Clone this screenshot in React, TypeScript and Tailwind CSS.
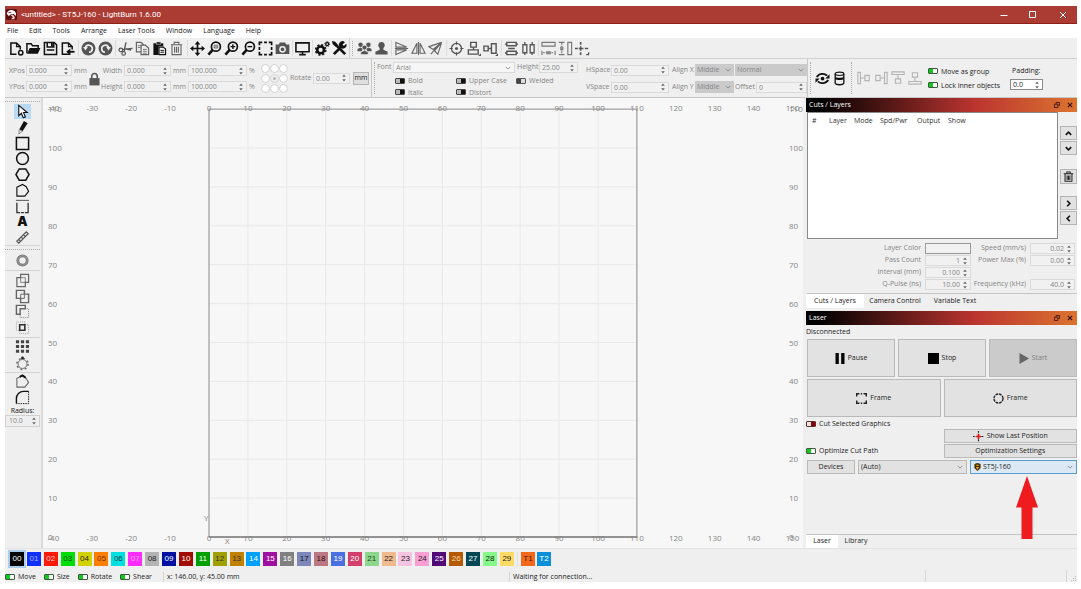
import React from 'react';
import clsx from 'clsx';

type Children = { children?: React.ReactNode };

/* ---------- small building blocks ---------- */

const Icon: React.FC<Children & { className?: string }> = ({ children, className }) => (
  <svg
    viewBox="0 0 16 16"
    className={clsx('shrink-0', className ?? 'w-[15px] h-[15px]')}
    fill="none"
    stroke="currentColor"
    strokeWidth="1.6"
  >
    {children}
  </svg>
);

const Spinner = () => (
  <svg viewBox="0 0 6 8" className="w-[6px] h-[8px] shrink-0 mr-[2px]" fill="#666">
    <path d="M3 0.5 4.8 2.8H1.2zM3 7.5 4.8 5.2H1.2z" />
  </svg>
);

interface SpinProps {
  label: string;
  value: string;
  className?: string;
  right?: boolean;
  active?: boolean;
}

const Spin: React.FC<SpinProps> = ({ label, value, className, right, active }) => (
  <div
    className={clsx(
      'flex items-center h-[11px] border',
      active ? 'bg-white border-[#8c8c8c] text-[#222]' : 'bg-[#f1f1f1] border-[#dadada] text-[#858585]',
      className,
    )}
  >
    <input
      aria-label={label}
      defaultValue={value}
      className={clsx('w-0 grow min-w-0 bg-transparent outline-none px-[2px] leading-[9px]', right && 'text-right')}
    />
    <Spinner />
  </div>
);

const Toggle: React.FC<{ label: string; on?: boolean; red?: boolean; dim?: boolean; flip?: boolean }> = ({
  label,
  on,
  red,
  dim,
  flip,
}) => (
  <label className={clsx('flex items-center gap-[3px] whitespace-nowrap', dim ? 'text-[#858585]' : 'text-[#222]')}>
    <input
      type="checkbox"
      defaultChecked={on}
      className={clsx(
        'appearance-none w-[10px] h-[6px] shrink-0 rounded-[1px] border',
        on && 'border-[#3c5a3c] bg-linear-to-r from-[#10c820] from-55% to-white to-55%',
        red && 'border-[#5a3030] bg-linear-to-r from-[#f0e4e4] from-45% to-[#8b0000] to-45%',
        flip && 'border-[#555] bg-linear-to-r from-[#444] from-45% to-[#ddd] to-45%',
        !on && !red && !flip && 'border-[#444] bg-linear-to-r from-[#bbb] from-45% to-[#111] to-45%',
      )}
    />
    {label}
  </label>
);

const Drop: React.FC<{ label: string; value: string; className?: string; pad?: string }> = ({
  label,
  value,
  className,
  pad,
}) => (
  <div className={clsx('relative flex items-center', className)}>
    <select
      aria-label={label}
      className={clsx('appearance-none bg-transparent w-full h-full outline-none', pad ?? 'pl-[2px]')}
    >
      <option>{value}</option>
    </select>
    <svg viewBox="0 0 8 5" className="absolute right-[3px] w-[6px] h-[4px] pointer-events-none" fill="none" stroke="#777">
      <path d="M1 1l3 3 3-3" />
    </svg>
  </div>
);

const Grip = ({ className }: { className?: string }) => (
  <div className={clsx('w-[2px] border-l border-dotted border-[#aaa] shrink-0', className)} />
);

const Sep = ({ wide }: { wide?: boolean }) => (
  <div className={clsx('shrink-0 h-[16px] flex justify-center', wide ? 'w-[4px]' : 'w-[3px]')}>
    <div className="w-px bg-[#dcdcdc]" />
  </div>
);

const Tool: React.FC<Children & { title: string; className?: string }> = ({ title, className, children }) => (
  <button aria-label={title} className={clsx('flex items-center justify-center shrink-0', className ?? 'w-[17px] h-[19px]')}>
    {children}
  </button>
);

/* ---------- top bars ---------- */

const TitleBar = () => (
  <div className="h-[18px] shrink-0 bg-[#ab3c34] border-b border-[#8f2018] flex items-center text-white">
    <svg viewBox="0 0 16 16" className="w-[11px] h-[11px] ml-px">
      <rect width="16" height="16" rx="2" fill="#5a0f14" />
      <path d="M1 7C2 2 8 0 12 3c3 2 3 5 2 7l-3-3-4 1-3 2z" fill="#fff" />
      <path d="M7 9l3-1 3 4-1 3H7l3-3z" fill="#f4c9c4" />
      <path d="M3 5l4-1 1 1-4 1z" fill="#7a1a1e" />
    </svg>
    <span className="ml-[4px] text-[8px] font-[Roboto] grow">&lt;untitled&gt; - ST5J-160 - LightBurn 1.6.00</span>
    <button aria-label="Minimize" className="w-[29px] flex justify-center">
      <svg viewBox="0 0 8 8" className="w-[8px] h-[8px]" stroke="#fff"><path d="M0.5 4.5h7" /></svg>
    </button>
    <button aria-label="Maximize" className="w-[30px] flex justify-center">
      <svg viewBox="0 0 8 8" className="w-[8px] h-[8px]" stroke="#fff" fill="none"><path d="M0.5 0.5h6v6h-6z" /></svg>
    </button>
    <button aria-label="Close" className="w-[29px] flex justify-center">
      <svg viewBox="0 0 8 8" className="w-[8px] h-[8px]" stroke="#fff"><path d="M1 1l6 6M7 1l-6 6" /></svg>
    </button>
  </div>
);

const menus = ['File', 'Edit', 'Tools', 'Arrange', 'Laser Tools', 'Window', 'Language', 'Help'];

const MenuBar = () => (
  <nav className="h-[14px] shrink-0 bg-white flex items-center gap-[11px] pl-[2px] text-[7px] text-[#222]">
    {menus.map((m) => (
      <button key={m}>{m}</button>
    ))}
  </nav>
);

const Lens = ({ children }: Children) => (
  <Icon>
    <circle cx="9.5" cy="6" r="4.8" strokeWidth="1.8" />
    <path d="M6 9.5L1.5 14.5" strokeWidth="2.8" />
    {children}
  </Icon>
);

const MainToolbar = () => (
  <div className="h-[21px] shrink-0 bg-[#efefef] border-b border-[#cfcfcf] flex items-center pl-[3px] text-[#111]">
    <Tool title="New">
      <Icon>
        <path d="M8 14H2V2h6l4 4v3" />
        <path d="M8 2v4h4" strokeWidth="1.2" />
        <circle cx="12.5" cy="12.5" r="2.3" />
      </Icon>
    </Tool>
    <Tool title="Open">
      <Icon>
        <path d="M1 13V3h4.5l1.5 2h6v2.5" />
        <path d="M1 13.6L4 7.4h11.4L12.6 13.6z" fill="currentColor" stroke="none" />
      </Icon>
    </Tool>
    <Tool title="Save">
      <Icon>
        <path d="M1.5 1.5H12L14.5 4v10.5h-13z" />
        <path d="M4.5 1.5v5h7v-5M4 9.5h8" />
        <path d="M9.5 2v4" strokeWidth="2" />
      </Icon>
    </Tool>
    <Tool title="Export">
      <Icon>
        <path d="M11 14H2.5V2H9l4 4v3" />
        <path d="M9 2v4h4" strokeWidth="1.2" />
        <path d="M15.5 11.5H9" strokeWidth="2" />
        <path d="M11 8v7l-4.5-3.5z" fill="currentColor" stroke="none" />
      </Icon>
    </Tool>
    <Sep wide />
    <Tool title="Undo">
      <Icon className="w-[15px] h-[15px] text-[#555]">
        <circle cx="8" cy="8" r="7.4" fill="currentColor" stroke="none" />
        <path d="M4.6 7.2A3.8 3.8 0 1 1 8.500 12" stroke="#efefef" strokeWidth="1.7" />
        <path d="M2.2 6.500h5L4.800 10z" fill="#efefef" stroke="none" />
      </Icon>
    </Tool>
    <Tool title="Redo">
      <Icon className="w-[15px] h-[15px] text-[#555]">
        <circle cx="8" cy="8" r="7.4" fill="currentColor" stroke="none" />
        <path d="M11.4 7.2A3.8 3.8 0 1 0 7.500 12" stroke="#efefef" strokeWidth="1.7" />
        <path d="M13.8 6.500h-5L11.200 10z" fill="#efefef" stroke="none" />
      </Icon>
    </Tool>
    <Sep />
    <Tool title="Cut">
      <Icon className="w-[15px] h-[15px] text-[#555]">
        <circle cx="3" cy="9.5" r="1.9" strokeWidth="1.3" />
        <circle cx="6" cy="13.2" r="1.9" strokeWidth="1.3" />
        <path d="M4.800 9L15.500 7.800M6.500 11.2L8.5 1.5M8.500 8.500l5.500 1.300" strokeWidth="1.4" />
      </Icon>
    </Tool>
    <Tool title="Copy">
      <Icon className="w-[15px] h-[15px] text-[#666]">
        <path d="M6 11.5H1.5v-10h5L9 4M6.5 4.5H11l3.5 3v7h-8z" strokeWidth="1.3" />
        <path d="M3 5h3M3 7h3M8.5 9h4M8.5 11h4M8.5 13h4" strokeWidth="0.9" />
      </Icon>
    </Tool>
    <Tool title="Paste">
      <Icon>
        <path d="M1.500 2.5H12v3H7v9.500H1.500z" fill="currentColor" stroke="none" />
        <path d="M4.5 1h5v2.5h-5z" fill="currentColor" stroke="#efefef" strokeWidth="0.6" />
        <path d="M7.5 6.5H12l2.5 2v6h-7z" fill="#efefef" strokeWidth="1.2" />
        <path d="M9 10h4M9 12h4" strokeWidth="1" />
      </Icon>
    </Tool>
    <Tool title="Delete">
      <Icon className="w-[15px] h-[15px] text-[#666]">
        <path d="M2 4h12M5.5 3.5v-2h5v2M3.2 4v10.5h9.6V4M6 6v6.5M8 6v6.5M10 6v6.5" strokeWidth="1.2" />
      </Icon>
    </Tool>
    <Sep wide />
    <Tool title="Pan">
      <Icon>
        <path d="M8 2v12M2 8h12" strokeWidth="1.8" />
        <path d="M8 0l3 3.6H5zM8 16l3-3.6H5zM0 8l3.6-3v6zM16 8l-3.6-3v6z" fill="currentColor" stroke="none" />
      </Icon>
    </Tool>
    <Tool title="Zoom to page"><Lens><path d="M7.5 4.5h4v3h-4z" strokeWidth="1" stroke="#777" fill="#aaa" /></Lens></Tool>
    <Tool title="Zoom in"><Lens><path d="M7 6h5M9.5 3.5v5" strokeWidth="1.5" /></Lens></Tool>
    <Tool title="Zoom out"><Lens><path d="M7 6h5" strokeWidth="1.5" /></Lens></Tool>
    <Tool title="Frame selection">
      <Icon>
        <path d="M1.5 4.500V1.5h3M11.500 1.5h3v3M14.5 11.500v3h-3M4.500 14.5h-3v-3M6.5 1.5h3M6.5 14.5h3M1.5 6.5v3M14.5 6.5v3" strokeWidth="1.8" />
      </Icon>
    </Tool>
    <Tool title="Camera">
      <Icon className="w-[15px] h-[15px] text-[#555]">
        <path d="M1.500 4.5h3l1.2-2h4.6l1.2 2h3v8.500h-13z" fill="currentColor" />
        <circle cx="8" cy="8.8" r="2.8" stroke="#eee" />
      </Icon>
    </Tool>
    <Sep />
    <Tool title="Preview">
      <Icon>
        <path d="M1 2h14v9.5H1zM4.5 14.5h7M8 11.5v3" strokeWidth="1.7" />
      </Icon>
    </Tool>
    <Sep />
    <Tool title="Settings">
      <Icon>
        <circle cx="6" cy="9.5" r="3.6" strokeWidth="2.8" />
        <circle cx="6" cy="9.5" r="5.4" strokeWidth="1.8" strokeDasharray="2.2 2.04" />
        <circle cx="13" cy="3.3" r="1.6" strokeWidth="1.4" />
        <circle cx="13" cy="3.3" r="2.6" strokeWidth="1" strokeDasharray="1.1 0.9" />
      </Icon>
    </Tool>
    <Tool title="Device settings">
      <Icon>
        <path d="M3.5 3.5l10.500 10.500" strokeWidth="2.8" />
        <path d="M1 1l2 .4L5 4 4 5 1.5 3z" fill="currentColor" />
        <path d="M2 14l8-8" strokeWidth="3" />
        <path d="M13.8 1.2L11.2 3.6l1.4 1.6 2.6-2.4a3.8 3.8 0 0 1-5 5L8 6A3.8 3.8 0 0 1 13.8 1.2z" fill="currentColor" stroke="none" />
      </Icon>
    </Tool>
    <div className="w-px h-[20px] bg-[#cfcfcf] ml-px" />
    <Grip className="h-[15px] mx-[2px]" />
    <Tool title="Group">
      <Icon className="w-[15px] h-[15px] text-[#555]">
        <g fill="currentColor" stroke="none">
          <circle cx="3.8" cy="4" r="2.4" />
          <circle cx="12.2" cy="4" r="2.4" />
          <path d="M0.5 11V8.5L3.8 7l2.4 1.2L5 11zM15.5 11V8.5L12.2 7 9.8 8.2 11 11z" />
          <circle cx="8" cy="7" r="2.6" stroke="#efefef" strokeWidth="0.6" />
          <path d="M4 14.5V12L8 9.8l4 2.2v2.5z" stroke="#efefef" strokeWidth="0.6" />
        </g>
      </Icon>
    </Tool>
    <Tool title="Ungroup">
      <Icon className="w-[15px] h-[15px] text-[#555]">
        <path d="M8 1a3.4 3.6 0 0 1 2 6.6V9.4l4.5 2V14.5h-13v-3.1l4.5-2V7.6A3.4 3.6 0 0 1 8 1z" fill="currentColor" stroke="none" />
      </Icon>
    </Tool>
    <Sep />
    <Tool title="Flip vertical">
      <Icon className="w-[15px] h-[15px] text-[#666]">
        <path d="M2 1.500L13.500 6.500H2zM2 14.500L13.500 9.500H2zM1 8h14" strokeWidth="1.2" />
      </Icon>
    </Tool>
    <Tool title="Flip horizontal">
      <Icon className="w-[15px] h-[15px] text-[#666]">
        <path d="M6.300 2.5v10.5H1zM9.700 2.5v10.5H15zM8 1v14" strokeWidth="1.2" />
      </Icon>
    </Tool>
    <Tool title="Mirror across line">
      <Icon className="w-[15px] h-[15px] text-[#666]">
        <path d="M14.5 1.5L1 6l4.5 3zM14.5 1.5L10.5 14 7 10.5zM14.5 1.5L3 14" strokeWidth="1.2" />
      </Icon>
    </Tool>
    <Sep wide />
    <Tool title="Align centers">
      <Icon className="w-[15px] h-[15px] text-[#555]">
        <circle cx="8" cy="8" r="5.4" strokeWidth="1.4" />
        <circle cx="8" cy="8" r="1.7" fill="currentColor" stroke="none" />
        <path d="M8 0.5V4M8 12v3.5M0.5 8H4M12 8h3.5" strokeWidth="1.3" />
      </Icon>
    </Tool>
    <Tool title="Align vertical centers">
      <Icon className="w-[15px] h-[15px] text-[#555]">
        <path d="M5 1.500h6v5H5zM2.500 9.5h10.500V14H2.500zM8 6.5v3" strokeWidth="1.5" />
        <path d="M13 16l3-3v3z" fill="currentColor" stroke="none" />
      </Icon>
    </Tool>
    <Tool title="Align horizontal centers">
      <Icon className="w-[15px] h-[15px] text-[#555]">
        <path d="M1 5.5h4.5v5H1zM9 3h5v10H9zM5.5 8H9" strokeWidth="1.5" />
        <path d="M13 16l3-3v3z" fill="currentColor" stroke="none" />
      </Icon>
    </Tool>
    <Sep wide />
    <Tool title="Distribute vertically">
      <Icon className="w-[15px] h-[15px] text-[#555]">
        <path d="M3 1.5h10v3.500H3zM4.500 8h7M3 11h10v3.5H3zM1 3.300h2M13 3.300h2M1 12.800h2M13 12.800h2" strokeWidth="1.5" />
      </Icon>
    </Tool>
    <Tool title="Distribute horizontally">
      <Icon className="w-[15px] h-[15px] text-[#555]">
        <path d="M2 4h4.2v8.5H2zM9.8 4H14v8.5H9.8zM4.1 1v3M4.1 12.5v2.5M11.9 1v3M11.9 12.5v2.5" strokeWidth="1.4" />
      </Icon>
    </Tool>
    <Sep />
    <Tool title="Push to width">
      <Icon className="w-[15px] h-[15px] text-[#777]">
        <path d="M1 1.5h14v4H1zM1 15V10.5M15 15v-4.5" strokeWidth="1.2" />
        <path d="M2 12.5h12" strokeWidth="1.2" strokeDasharray="2 1" />
        <path d="M5.5 10.8h5v3.5h-5z" fill="#888" stroke="none" />
      </Icon>
    </Tool>
    <Tool title="Push to height">
      <Icon className="w-[15px] h-[15px] text-[#777]">
        <path d="M1 1.5h6M1 14.5h6M10.5 1.5h4v13h-4z" strokeWidth="1.2" />
        <path d="M4 2v12" strokeDasharray="2 1" strokeWidth="1.2" />
        <path d="M2.300 6h3.500v4H2.300z" fill="#888" stroke="none" />
      </Icon>
    </Tool>
    <Tool title="Move to center">
      <Icon className="w-[15px] h-[15px] text-[#555]">
        <path d="M6 1v3M6 5.500v5M6 12v3M0 8h3M4 8h5M10.500 8H14" strokeWidth="1.700" />
        <path d="M12 14.500h3M14.500 12v3" strokeWidth="1.300" />
      </Icon>
    </Tool>
  </div>
);

const DockAlign = ({ children, title }: Children & { title: string }) => (
  <Tool title={title}>
    <Icon className="w-[14px] h-[14px] text-[#b5b5b5]">{children}</Icon>
  </Tool>
);

const PropertyBar = () => (
  <div className="h-[39px] shrink-0 bg-[#efefef] border-b border-[#c8c8c8] flex text-[7px] text-[#858585] whitespace-nowrap overflow-hidden">
    {/* position and size */}
    <div className="flex items-start pt-[6px] pl-[4px] shrink-0">
      <div className="grid grid-cols-[17px_46px_15px] gap-y-[5px] items-center leading-[11px]">
        <span>XPos</span>
        <Spin label="XPos" value="0.000" />
        <span className="pl-[2px]">mm</span>
        <span>YPos</span>
        <Spin label="YPos" value="0.000" />
        <span className="pl-[2px]">mm</span>
      </div>
      <button aria-label="Lock aspect ratio" className="w-[14px] h-[27px] flex items-center justify-center text-[#555]">
        <svg viewBox="0 0 12 15" className="w-[11px] h-[14px]">
          <path d="M3 7V4.500a3 3 0 0 1 6 0V7" fill="none" stroke="currentColor" strokeWidth="1.700" />
          <path d="M0.500 6.500h11v8H0.500z" fill="currentColor" />
        </svg>
      </button>
      <div className="grid grid-cols-[23px_47px_17px_59px_13px] gap-y-[5px] items-center leading-[11px]">
        <span className="text-right pr-[2px]">Width</span>
        <Spin label="Width" value="0.000" />
        <span className="pl-[2px]">mm</span>
        <Spin label="Width percent" value="100.000" />
        <span className="pl-[2px]">%</span>
        <span className="text-right pr-[2px]">Height</span>
        <Spin label="Height" value="0.000" />
        <span className="pl-[2px]">mm</span>
        <Spin label="Height percent" value="100.000" />
        <span className="pl-[2px]">%</span>
      </div>
    </div>
    <div className="grid grid-cols-3 content-center gap-y-px shrink-0 w-[27px] ml-px">
      {Array.from({ length: 9 }, (_, i) => (
        <input
          key={i}
          type="radio"
          name="anchor"
          aria-label={`Anchor ${i + 1}`}
          defaultChecked={i === 4}
          className="appearance-none size-[9px] rounded-full border border-[#d4d4d4] bg-white bg-clip-content checked:p-[2px] checked:bg-[#b4b4b4]"
        />
      ))}
    </div>
    <div className="flex items-center pl-[2px] pr-[2px] shrink-0 border-r border-[#c8c8c8]">
      <span className="w-[23px]">Rotate</span>
      <Spin label="Rotate" value="0.00" className="w-[37px]" />
      <button className="ml-[3px] w-[16px] h-[13px] border border-[#b4b4b4] bg-[#dedede] text-[#222] leading-[10px]">mm</button>
    </div>

    {/* text options */}
    <Grip className="my-[3px] ml-[2px]" />
    <div className="pl-px pt-[3px] shrink-0 w-[202px]">
      <div className="flex items-center h-[11px]">
        <span className="w-[16px]">Font</span>
        <Drop label="Font" value="Arial" className="w-[122px] h-[11px] bg-[#f6f6f6] border border-[#dadada]" />
        <span className="w-[24px] pl-[2px]">Height</span>
        <Spin label="Text height" value="25.00" className="w-[39px]" />
      </div>
      <div className="grid grid-cols-[61px_60px_1fr] pl-[18px] pt-[2px] h-[25px] items-center leading-[9px]">
        <Toggle label="Bold" dim />
        <Toggle label="Upper Case" dim />
        <Toggle label="Welded" dim flip />
        <Toggle label="Italic" dim />
        <Toggle label="Distort" dim />
      </div>
    </div>
    <div className="grid grid-cols-[25px_58px_26px_39px_73px] gap-y-[5px] items-center content-start leading-[12px] pt-[5px] pl-[8px] shrink-0">
      <span>HSpace</span>
      <Spin label="HSpace" value="0.00" />
      <span className="pl-[3px]">Align X</span>
      <Drop label="Align X" value="Middle" className="h-[12px] bg-[#cacaca]" />
      <Drop label="Text mode" value="Normal" className="h-[12px] bg-[#cacaca] ml-px" />
      <span>VSpace</span>
      <Spin label="VSpace" value="0.00" />
      <span className="pl-[3px]">Align Y</span>
      <Drop label="Align Y" value="Middle" className="h-[12px] bg-[#cacaca]" />
      <div className="flex items-center pl-px">
        <span className="w-[21px]">Offset</span>
        <Spin label="Offset" value="0" className="grow" />
      </div>
    </div>
    <div className="w-px bg-[#c8c8c8] shrink-0" />

    {/* arrangement */}
    <Grip className="my-[3px] ml-[2px]" />
    <div className="flex items-center pl-[2px] text-[#111] shrink-0">
      <Tool title="Refresh">
        <Icon>
          <path d="M2 6.500a6.500 5.500 0 0 1 11-1.500M14 9.500a6.500 5.500 0 0 1-11 1.500" strokeWidth="2" />
          <path d="M15.500 3.500v4.500h-4.500zM0.500 12.500V8h4.500z" fill="currentColor" stroke="none" />
          <circle cx="8" cy="8" r="2" fill="currentColor" stroke="none" />
        </Icon>
      </Tool>
      <Tool title="Rotary">
        <Icon>
          <ellipse cx="8" cy="3" rx="4.600" ry="1.800" strokeWidth="1.200" />
          <path d="M3.400 3v10c1 2.200 8.200 2.200 9.200 0V3" strokeWidth="1.400" />
          <path d="M3.400 6c1.500 1.500 7.700 1.500 9.200 0v2.500c-1.500 1.500-7.700 1.500-9.200 0z" fill="currentColor" stroke="none" />
        </Icon>
      </Tool>
    </div>
    <Grip className="my-[3px] ml-[3px]" />
    <div className="flex items-center pl-[2px] shrink-0">
      <DockAlign title="Dock left"><path d="M1 1.500h3v13H1zM9 5h5v6H9zM4 8h5" strokeWidth="1.300" /></DockAlign>
      <DockAlign title="Dock right"><path d="M12 1.500h3v13h-3zM2 5h5v6H2zM7 8h5" strokeWidth="1.300" /></DockAlign>
      <DockAlign title="Dock top"><path d="M1 1h14v3H1zM5 9h6v5H5zM8 4v5" strokeWidth="1.300" /></DockAlign>
      <DockAlign title="Dock bottom"><path d="M1 12h14v3H1zM5 2h6v5H5zM8 7v5" strokeWidth="1.300" /></DockAlign>
    </div>
    <div className="flex flex-col justify-center gap-[5px] pl-[5px] shrink-0 leading-[9px]">
      <Toggle label="Move as group" on />
      <Toggle label="Lock inner objects" on />
    </div>
    <div className="flex flex-col justify-center gap-[4px] pl-[10px] shrink-0 text-[#222]">
      <span className="leading-[9px] pl-[2px]">Padding:</span>
      <Spin label="Padding" value="0.0" className="w-[33px]" active />
    </div>
  </div>
);

/* ---------- left tool column ---------- */

const LeftRule = () => <div className="h-px bg-[#d2d2d2] shrink-0" />;

const shape = 'w-[15px] h-[15px]';
const faint = 'w-[15px] h-[15px] text-[#666]';

const LeftTools = () => (
  <aside className="w-[38px] shrink-0 bg-[#efefef] border-r-2 border-[#dadada] pr-px flex flex-col text-[7px] text-[#111]">
    <div className="mt-[3px] mb-[2px] border-t border-dotted border-[#aaa]" />
    <div className="h-[141px] flex flex-col items-center justify-between">
      <Tool title="Select" className="w-[17px] h-[15px] bg-[#b9d9f3]">
        <Icon className={shape}><path d="M4 1.500v11l2.800-2.600 2 4.800 2.300-1-2-4.600H13z" fill="#fff" strokeWidth="1.200" /></Icon>
      </Tool>
      <Tool title="Draw lines" className="w-[17px] h-[15px]">
        <Icon className={shape}>
          <path d="M9.500 1l4 2.500L8 12 4.500 10z" fill="currentColor" stroke="none" />
          <path d="M4.500 10L8 12l-4 3z" strokeWidth="0.800" stroke="#777" fill="#ddd" />
        </Icon>
      </Tool>
      <Tool title="Rectangle" className="w-[17px] h-[15px]"><Icon className={shape}><path d="M1.500 1.500h13v13h-13z" /></Icon></Tool>
      <Tool title="Ellipse" className="w-[17px] h-[15px]"><Icon className={shape}><circle cx="8" cy="8" r="6.300" /></Icon></Tool>
      <Tool title="Polygon" className="w-[17px] h-[15px]"><Icon className={shape}><path d="M4.500 2h7L15 8l-3.500 6h-7L1 8z" /></Icon></Tool>
      <Tool title="Edit nodes" className="w-[17px] h-[15px]">
        <Icon className={shape}><path d="M2 4.500L8 1.500 12 4l2.500 5-4 5H2z" strokeWidth="1.200" /></Icon>
      </Tool>
      <Tool title="Trim shapes" className="w-[17px] h-[15px]">
        <Icon className={faint}>
          <path d="M1 1.500h14" strokeWidth="1.200" />
          <path d="M2 4v10.500h3.500M14 4v10.500h-3.500M6.500 14.500h3" strokeWidth="1.400" stroke="#333" />
        </Icon>
      </Tool>
      <Tool title="Create text" className="w-[17px] h-[15px] font-[Inter] font-black text-[13px] leading-[15px]">A</Tool>
      <Tool title="Measure" className="w-[17px] h-[15px]">
        <Icon className="w-[15px] h-[15px] text-[#555]"><path d="M2 12L12 2 14 4 4 14zM4.500 10.500l1 1M7 8l1 1M9.500 5.500l1 1" strokeWidth="1.300" /></Icon>
      </Tool>
    </div>
    <LeftRule />
    <div className="mt-[3px] mb-px border-t border-dotted border-[#aaa]" />
    <div className="h-[19px] flex justify-center items-center">
      <Tool title="Offset shapes" className="w-[17px] h-[15px]">
        <Icon className="w-[15px] h-[15px] text-[#777]">
          <circle cx="8" cy="8" r="5" strokeWidth="3" />
          <circle cx="8" cy="8" r="5" stroke="#aaa" strokeWidth="0.800" />
        </Icon>
      </Tool>
    </div>
    <LeftRule />
    <div className="h-[66px] py-[2px] flex flex-col items-center justify-between">
      <Tool title="Weld" className="w-[17px] h-[15px]">
        <Icon className={faint}><path d="M2 5h4V1.500h8.500V10H11v4.500H2z" strokeWidth="1.300" /><path d="M6 5h5v5H6z" strokeWidth="0.800" /></Icon>
      </Tool>
      <Tool title="Boolean union" className="w-[17px] h-[15px]">
        <Icon className={faint}><path d="M1.500 1.500h8.500v4h4.500v9H6V10H1.500z" strokeWidth="1.500" /><path d="M10 5.500H6V10h4z" strokeWidth="1" /></Icon>
      </Tool>
      <Tool title="Boolean subtract" className="w-[17px] h-[15px]">
        <Icon className={faint}><path d="M1.500 1.500h9.500V5H5.500v6h-4z" strokeWidth="1.500" /><path d="M11 5h3.500v9.500h-9V11" strokeWidth="0.800" strokeDasharray="1 1" /></Icon>
      </Tool>
      <Tool title="Boolean intersection" className="w-[17px] h-[15px]">
        <Icon className={faint}><path d="M1.500 2h9v9h-9zM5 5h9.500v9.500H5z" strokeWidth="0.600" strokeDasharray="1 1" /><path d="M5 5h5.500v6H5z" strokeWidth="1.700" stroke="#333" /></Icon>
      </Tool>
    </div>
    <LeftRule />
    <div className="h-[34px] py-px flex flex-col items-center justify-between">
      <Tool title="Grid array" className="w-[17px] h-[15px]">
        <Icon className={shape}><path d="M1 3h14M1 8h14M1 13h14" stroke="#444" strokeWidth="3.200" strokeDasharray="3.400 1.900" /></Icon>
      </Tool>
      <Tool title="Circular array" className="w-[17px] h-[15px]">
        <Icon className={faint}>
          <circle cx="8" cy="8.500" r="4.800" strokeWidth="1" />
          <circle cx="8" cy="8.500" r="6" strokeWidth="1.500" strokeDasharray="2 2.710" />
          <circle cx="8" cy="2" r="1.500" fill="#222" stroke="none" />
        </Icon>
      </Tool>
    </div>
    <LeftRule />
    <div className="h-[33px] py-px flex flex-col items-center justify-between">
      <Tool title="Start point" className="w-[17px] h-[15px]">
        <Icon className={faint}><path d="M2 14V4.500L8 2l4 3 2.500 4-4 5z" strokeWidth="1.100" /><path d="M5 3l3-1.500 3.500 2.500" stroke="#111" strokeWidth="2" /></Icon>
      </Tool>
      <Tool title="Radius" className="w-[17px] h-[15px]">
        <Icon className={shape}><path d="M1.500 14.500V9A7.500 7.500 0 0 1 9 1.500h5.500" strokeWidth="1.500" /><path d="M14.500 1.500v13h-13" strokeWidth="1" strokeDasharray="1.500 1" /></Icon>
      </Tool>
    </div>
    <label htmlFor="radius" className="text-center leading-[9px]">Radius:</label>
    <div className="flex items-center h-[12px] border border-[#d0d0d0] text-[#858585]">
      <input id="radius" defaultValue="10.0" className="w-0 grow bg-transparent outline-none pl-[3px]" />
      <Spinner />
    </div>
  </aside>
);

/* ---------- work area ---------- */

const STEP = 38.9; // pixels per 10 mm
const X0 = 166;
const Y0 = 439;

const Workspace = () => {
  const xs = Array.from({ length: 20 }, (_, i) => i - 4);
  const ys = Array.from({ length: 12 }, (_, i) => i);
  const right = X0 + 11 * STEP;
  const top = Y0 - 11 * STEP;
  return (
    <main className="grow min-w-0 bg-[#f7f7f7] overflow-hidden">
      <svg className="w-full h-full text-[8px]" fill="#858585">
        <g stroke="#e8e8e8">
          {ys.slice(1, 11).map((i) => (
            <React.Fragment key={i}>
              <line x1={X0 + i * STEP} x2={X0 + i * STEP} y1={top} y2={Y0} />
              <line x1={X0} x2={right} y1={Y0 - i * STEP} y2={Y0 - i * STEP} />
            </React.Fragment>
          ))}
        </g>
        <rect x={X0} y={top} width={right - X0} height={Y0 - top} fill="none" stroke="#8a8a8a" />
        <line x1={X0} x2={right} y1={Y0} y2={Y0} stroke="#666" />
        {xs.map((i) => (
          <React.Fragment key={i}>
            <text x={X0 + i * STEP} y={13} textAnchor="middle">{i * 10}</text>
            <text x={X0 + i * STEP} y={443} textAnchor="middle">{i * 10}</text>
          </React.Fragment>
        ))}
        {ys.map((i) => (
          <React.Fragment key={i}>
            <text x={5} y={Y0 - i * STEP + 3}>{i * 10}</text>
            <text x={746} y={Y0 - i * STEP + 3}>{i * 10}</text>
          </React.Fragment>
        ))}
        <text x={161} y={423}>Y</text>
        <text x={182} y={446} fill="#a06a6a">X</text>
      </svg>
    </main>
  );
};

/* ---------- right docks ---------- */

const DockTitle = ({ title }: { title: string }) => (
  <div className="h-[14px] shrink-0 bg-linear-to-r/srgb from-black from-5% via-[#bb3430] via-62% to-[#dc7430] flex items-center pl-[3px] pr-[4px] text-white">
    <span className="grow">{title}</span>
    <button aria-label={`Float ${title}`} className="mr-[7px]">
      <svg viewBox="0 0 7 7" className="w-[6px] h-[6px]" fill="none" stroke="#3a1208"><path d="M2.500 2V0.500h4v3.500H5M0.500 2.500h4v4h-4z" /></svg>
    </button>
    <button aria-label={`Close ${title}`}>
      <svg viewBox="0 0 7 7" className="w-[6px] h-[6px]" fill="none" stroke="#3a1208" strokeWidth="1.300"><path d="M1 1l5 5M6 1L1 6" /></svg>
    </button>
  </div>
);

const SideButton = ({ title, d, className }: { title: string; d: string; className?: string }) => (
  <button aria-label={title} className={clsx('h-[14px] border border-[#b5b5b5] bg-[#e2e2e2] flex items-center justify-center', className)}>
    <svg viewBox="0 0 10 10" className="w-[9px] h-[9px]" fill="none" stroke="#111" strokeWidth="1.800"><path d={d} /></svg>
  </button>
);

const CutsPanel = () => (
  <section>
    <DockTitle title="Cuts / Layers" />
    <div className="flex h-[127px]">
      <div className="grow ml-px bg-white border border-[#8a8a8a]">
        <table className="text-[#333]">
          <thead>
            <tr className="h-[17px] text-left [&>th]:font-normal [&>th]:p-0">
              <th className="w-[21px]"><span className="pl-[4px]">#</span></th>
              <th className="w-[25px]">Layer</th>
              <th className="w-[26px]">Mode</th>
              <th className="w-[37px]">Spd/Pwr</th>
              <th className="w-[31px]">Output</th>
              <th>Show</th>
            </tr>
          </thead>
        </table>
      </div>
      <div className="w-[17px] ml-[2px] flex flex-col pt-[14px]">
        <SideButton title="Move up" d="M2 6.500l3-3 3 3" />
        <SideButton title="Move down" d="M2 3.500l3 3 3-3" className="mt-px" />
        <button aria-label="Delete layer" className="mt-[14px] h-[15px] border border-[#b5b5b5] bg-[#e2e2e2] flex items-center justify-center">
          <Icon className="w-[11px] h-[11px]">
            <path d="M1 4h14M5.500 3.500v-2h5v2M3 4v11h10V4M6 6.500V13M8 6.500V13M10 6.500V13" strokeWidth="1.500" />
          </Icon>
        </button>
        <SideButton title="Next" d="M3.500 2l3 3-3 3" className="mt-[12px]" />
        <SideButton title="Previous" d="M6.500 2l-3 3 3 3" className="mt-px" />
      </div>
    </div>
    <div className="h-[55px] ml-px pt-[4px] pr-[2px] border-b border-[#c4c4c4] grid grid-cols-[1fr_46px_59px_45px] content-start gap-y-px items-center text-right text-[#858585]">
      <span className="pr-[4px]">Layer Color</span>
      <button aria-label="Layer color" className="h-[11px] border border-[#9a9a9a] bg-[#f1f1f1]" />
      <span className="pr-[4px]">Speed (mm/s)</span>
      <Spin label="Speed" value="0.02" right />
      <span className="pr-[4px]">Pass Count</span>
      <Spin label="Pass Count" value="1" right />
      <span className="pr-[4px]">Power Max (%)</span>
      <Spin label="Power Max" value="0.00" right />
      <span className="pr-[4px]">Interval (mm)</span>
      <Spin label="Interval" value="0.100" right />
      <span />
      <span />
      <span className="pr-[4px]">Q-Pulse (ns)</span>
      <Spin label="Q-Pulse" value="10.00" right />
      <span className="pr-[4px]">Frequency (kHz)</span>
      <Spin label="Frequency" value="40.0" right />
    </div>
    <div className="flex h-[14px] items-stretch">
      <button className="w-[58px] bg-white">Cuts / Layers</button>
      <button className="w-[62px]">Camera Control</button>
      <button className="w-[58px]">Variable Text</button>
    </div>
  </section>
);

const btn = 'border border-[#b9b9b9] bg-[#e2e2e2] flex items-center justify-center gap-[3px]';

const LaserPanel = () => (
  <section className="grow flex flex-col mt-[3px]">
    <DockTitle title="Laser" />
    <p className="h-[14px] leading-[14px]">Disconnected</p>
    <div className="grid grid-cols-3 gap-[3px] pl-px">
      <button className={clsx(btn, 'h-[38px]')}>
        <svg viewBox="0 0 10 11" className="w-[10px] h-[11px]"><path d="M0.500 0h3.300v11H0.500zM6.200 0h3.300v11H6.200z" /></svg>
        Pause
      </button>
      <button className={clsx(btn, 'h-[38px]')}>
        <svg viewBox="0 0 11 11" className="w-[11px] h-[11px]"><path d="M0 0h11v11H0z" /></svg>
        Stop
      </button>
      <button className="h-[38px] border border-[#bcbcbc] bg-[#cbcbcb] text-[#808080] flex items-center justify-center gap-[3px]">
        <svg viewBox="0 0 10 11" className="w-[10px] h-[11px]" fill="#666"><path d="M0.500 0L10 5.500 0.500 11z" /></svg>
        Start
      </button>
    </div>
    <div className="grid grid-cols-2 gap-[3px] pl-px pt-[2px]">
      <button className={clsx(btn, 'h-[38px]')}>
        <Icon className="w-[11px] h-[11px]"><path d="M1 5V1h4M11 1h4v4M15 11v4h-4M5 15H1v-4M7 1h2M7 15h2" strokeWidth="2.200" /></Icon>
        Frame
      </button>
      <button className={clsx(btn, 'h-[38px]')}>
        <Icon className="w-[11px] h-[11px]"><circle cx="8" cy="8" r="6.600" strokeWidth="2" strokeDasharray="4 1.180" /></Icon>
        Frame
      </button>
    </div>
    <div className="grid grid-cols-2 gap-x-[3px] pl-px pt-px">
      <div className="flex flex-col justify-between pb-[2px] -ml-px leading-[11px]">
        <Toggle label="Cut Selected Graphics" red />
        <Toggle label="Optimize Cut Path" on />
      </div>
      <div className="flex flex-col pt-[11px] gap-px">
        <button className={clsx(btn, 'h-[14px]')}>
          <Icon className="w-[11px] h-[11px]">
            <path d="M8 0v4M8 12v4M0 8h4M12 8h4" strokeDasharray="2.500 1" />
            <path d="M8 4.500v7M4.500 8h7" stroke="#e01818" strokeWidth="2.500" />
          </Icon>
          Show Last Position
        </button>
        <button className={clsx(btn, 'h-[14px]')}>Optimization Settings</button>
      </div>
    </div>
    <div className="flex h-[14px] gap-[3px] pl-px mt-[2px]">
      <button className={clsx(btn, 'w-[48px]')}>Devices</button>
      <Drop label="Connection" value="(Auto)" className="grow bg-[#e2e2e2] border border-[#b9b9b9]" />
      <div className="relative w-[107px] flex">
        <Drop label="Device" value="ST5J-160" className="w-full bg-[#dce9f5] border border-[#5c9dd0]" pad="pl-[12px]" />
        <svg viewBox="0 0 8 9" className="absolute left-[4px] top-[3px] w-[7px] h-[8px] pointer-events-none">
          <path d="M0.500 1L4 0l3.500 1v4.500L4 9 0.500 5.500z" fill="#3a2605" />
          <path d="M1.300 2h5.400L4 3.500zM2 4.500h4L4 7.500z" fill="#f0a51c" />
        </svg>
        {/* pointer to the device list */}
        <svg viewBox="0 0 22 63" className="absolute left-[46px] top-[16px] w-[22px] h-[63px] pointer-events-none" fill="#ee1c1f">
          <path d="M11 0L22 31.500h-5.500V63h-11V31.500H0z" />
        </svg>
      </div>
    </div>
    <div className="grow" />
    <div className="flex h-[14px] border-t border-[#c4c4c4]">
      <button className="w-[32px] bg-white">Laser</button>
      <button className="w-[36px]">Library</button>
    </div>
  </section>
);

/* ---------- bottom bars ---------- */

const swatches = [
  ['00', 'bg-black text-white outline-2 outline-[#a9cdea]'],
  ['01', 'bg-[#1030ff] text-[#9fb0ff]'],
  ['02', 'bg-[#ff1a08] text-[#ffc8c0]'],
  ['03', 'bg-[#00dd08] text-[#064d08]'],
  ['04', 'bg-[#d2d200] text-[#222]'],
  ['05', 'bg-[#ff8000] text-[#6b3500]'],
  ['06', 'bg-[#00e0e0] text-[#104040]'],
  ['07', 'bg-[#ff2cff] text-[#ffa8ff]'],
  ['08', 'bg-[#b4b4b4] text-[#222]'],
  ['09', 'bg-[#0010a0] text-white'],
  ['10', 'bg-[#a00c00] text-white'],
  ['11', 'bg-[#00a000] text-white'],
  ['12', 'bg-[#a0a000] text-[#333]'],
  ['13', 'bg-[#c08000] text-[#333]'],
  ['14', 'bg-[#00a0ff] text-white'],
  ['15', 'bg-[#a010a0] text-white'],
  ['16', 'bg-[#808080] text-white'],
  ['17', 'bg-[#7d87b9] text-[#111]'],
  ['18', 'bg-[#bb7784] text-[#331118]'],
  ['19', 'bg-[#4a6fe3] text-white'],
  ['20', 'bg-[#d33f6a] text-white'],
  ['21', 'bg-[#8cd78c] text-[#224422]'],
  ['22', 'bg-[#f0b98d] text-[#222]'],
  ['23', 'bg-[#f6c4e1] text-[#222]'],
  ['24', 'bg-[#fa9ed4] text-[#222]'],
  ['25', 'bg-[#500a78] text-white'],
  ['26', 'bg-[#b45a00] text-[#ffd9a8]'],
  ['27', 'bg-[#004754] text-white'],
  ['28', 'bg-[#86fa88] text-[#111]'],
  ['29', 'bg-[#ffdb66] text-[#222]'],
];

const swatchBase = "w-[14px] h-[14px] shrink-0 text-[8px] leading-[14px] text-center font-['Liberation_Sans']";

const ColorBar = () => (
  <div className="h-[22px] shrink-0 bg-[#efefef] border-t border-[#e2e2e2] flex items-center pl-[5px] pb-[2px]">
    <div className="w-[504px] flex justify-between">
      {swatches.map(([name, color]) => (
        <button key={name} className={clsx(swatchBase, color)}>{name}</button>
      ))}
    </div>
    <div className="w-px h-[14px] bg-[#ddd] mx-[3px]" />
    <button className={clsx(swatchBase, 'bg-[#f4681c] text-[#4a1800]')}>T1</button>
    <button className={clsx(swatchBase, 'bg-[#0a90d8] text-white ml-[2px]')}>T2</button>
  </div>
);

const StatusBar = () => (
  <footer className="h-[12px] shrink-0 bg-[#efefef] flex items-end text-[7px] text-[#222] whitespace-nowrap">
    <div className="w-[158px] flex gap-[8px] items-center leading-[10px]">
      <Toggle label="Move" on />
      <Toggle label="Size" on />
      <Toggle label="Rotate" on />
      <Toggle label="Shear" on />
    </div>
    <span className="w-[346px] border-l border-[#d5d5d5] pl-[3px] leading-[10px]">x: 146.00, y: 45.00 mm</span>
    <span className="grow border-l border-[#d5d5d5] pl-[3px] leading-[10px]">Waiting for connection...</span>
    <span className="w-[141px] h-full border-l border-[#d5d5d5]" />
    <span className="w-[11px] h-full border-l border-[#d5d5d5] flex items-end justify-end">
      <svg viewBox="0 0 6 6" className="w-[6px] h-[6px]" fill="#bbb"><path d="M4 0h1v1H4zM2 2h1v1H2zM4 2h1v1H4zM0 4h1v1H0zM2 4h1v1H2zM4 4h1v1H4z" /></svg>
    </span>
  </footer>
);

export default function App() {
  return (
    <div className="h-screen bg-white pt-[6px] pb-[7px] pl-[5px] pr-[4px] font-['Open_Sans','Noto_Sans',sans-serif] flex flex-col overflow-hidden">
      <TitleBar />
      <MenuBar />
      <MainToolbar />
      <PropertyBar />
      <div className="grow min-h-0 flex bg-[#efefef]">
        <LeftTools />
        <Workspace />
        <div className="w-[271px] ml-[3px] shrink-0 flex flex-col text-[7px] text-[#222]">
          <CutsPanel />
          <LaserPanel />
        </div>
      </div>
      <ColorBar />
      <StatusBar />
    </div>
  );
}
